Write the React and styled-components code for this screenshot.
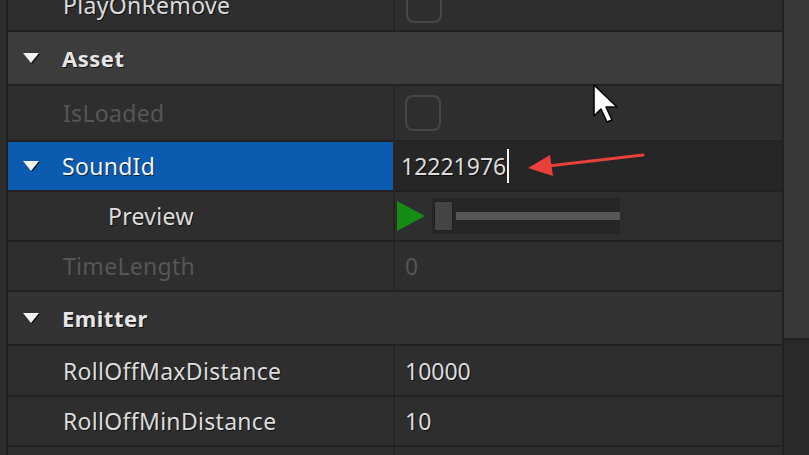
import React from 'react'
import styled, { createGlobalStyle } from 'styled-components'

const Global = createGlobalStyle`
  html, body {
    margin: 0;
    padding: 0;
    background: #2c2c2c;
    overflow: hidden;
  }
  body {
    font-family: "Noto Sans", "Open Sans", sans-serif;
  }
`

const Page = styled.div`
  position: relative;
  display: flex;
  width: 809px;
  height: 455px;
  overflow: hidden;
  background: #2c2c2c;
`

const Gutter = styled.div`
  width: 6px;
  flex: none;
  background: #2d2d2d;
  border-right: 2px solid #1f1f1f;
`

const Panel = styled.div`
  flex: 1;
  display: flex;
  flex-direction: column;
  margin-top: -21px;
  border-right: 2px solid #222;
`

const Row = styled.div`
  display: grid;
  grid-template-columns: 385px 1fr;
  height: ${p => p.h || 50}px;
  flex: none;
  box-sizing: border-box;
  border-bottom: 2px solid #222;
  background: #2e2e2e;
`

const Header = styled.div`
  display: flex;
  align-items: center;
  height: ${p => p.h || 54}px;
  flex: none;
  box-sizing: border-box;
  border-bottom: 2px solid #222;
  background: ${p => (p.hover ? '#3c3c3c' : '#333333')};
  color: #e6e6e6;
  font-size: 22px;
  letter-spacing: 0.5px;
  font-weight: 700;
  text-shadow: 1px 1px 0 rgba(0, 0, 0, 0.7);
`

const Caret = styled.span`
  width: 0;
  height: 0;
  margin: 0 23px 0 15px;
  border-left: 8px solid transparent;
  border-right: 8px solid transparent;
  border-top: 10px solid #f2f2f2;
  filter: drop-shadow(1px 1px 0 rgba(0, 0, 0, 0.8));
`

const Name = styled.div`
  display: flex;
  align-items: center;
  padding-left: ${p => p.indent || 55}px;
  font-size: 23px;
  letter-spacing: 0.3px;
  color: ${p => (p.disabled ? '#565656' : '#dcdcdc')};
  background: ${p => (p.selected ? '#0b5bb0' : 'transparent')};
  text-shadow: ${p => (p.disabled ? 'none' : '1px 1px 0 rgba(0, 0, 0, 0.6)')};
  ${p => p.selected && 'color: #f4f4f4; padding-left: 0;'}
`

const Value = styled.div`
  display: flex;
  align-items: center;
  padding-left: ${p => p.pad ?? 12}px;
  border-left: 2px solid #262626;
  font-size: 23px;
  color: ${p => (p.disabled ? '#555555' : '#dcdcdc')};
  background: ${p => (p.editing ? '#262626' : 'transparent')};
  text-shadow: ${p => (p.disabled ? 'none' : '1px 1px 0 rgba(0, 0, 0, 0.7)')};
`

const Checkbox = styled.span`
  width: 36px;
  height: 36px;
  box-sizing: border-box;
  border: 2px solid #474747;
  border-radius: 8px;
`

const TextCursor = styled.span`
  display: inline-block;
  width: 2px;
  height: 34px;
  margin-left: 1px;
  background: #f2f2f2;
`

const Play = styled.span`
  width: 0;
  height: 0;
  border-top: 15px solid transparent;
  border-bottom: 15px solid transparent;
  border-left: 28px solid #138d13;
  margin-right: 7px;
`

const Slider = styled.div`
  display: flex;
  align-items: center;
  width: 188px;
  height: 36px;
  padding-left: 2px;
  box-sizing: border-box;
  background: #272727;
`

const Thumb = styled.span`
  width: 19px;
  height: 30px;
  box-sizing: border-box;
  background: #454545;
  border: 1px solid #1f1f1f;
  border-radius: 2px;
`

const Track = styled.span`
  flex: 1;
  height: 8px;
  margin-left: 3px;
  background: #575757;
`

const Scrollbar = styled.div`
  width: 25px;
  flex: none;
  display: flex;
  flex-direction: column;
  background: #2a2a2a;
`

const ScrollThumb = styled.div`
  height: 338px;
  background: #393939;
  border-bottom: 3px solid #232323;
`

const Overlay = styled.svg`
  position: absolute;
  left: 0;
  top: 0;
  pointer-events: none;
`

export default function App () {
  return (
    <Page>
      <Global />
      <Gutter />
      <Panel>
        <Row h={53}>
          <Name>PlayOnRemove</Name>
          <Value pad={11}><Checkbox /></Value>
        </Row>
        <Header hover><Caret />Asset</Header>
        <Row h={56}>
          <Name disabled>IsLoaded</Name>
          <Value pad={10}><Checkbox /></Value>
        </Row>
        <Row>
          <Name selected><Caret />SoundId</Name>
          <Value editing pad={6}>12221976<TextCursor /></Value>
        </Row>
        <Row>
          <Name indent={100}>Preview</Name>
          <Value pad={2}>
            <Play />
            <Slider><Thumb /><Track /></Slider>
          </Value>
        </Row>
        <Row>
          <Name disabled>TimeLength</Name>
          <Value disabled pad={10}>0</Value>
        </Row>
        <Header><Caret />Emitter</Header>
        <Row h={51}>
          <Name>RollOffMaxDistance</Name>
          <Value pad={10}>10000</Value>
        </Row>
        <Row>
          <Name>RollOffMinDistance</Name>
          <Value pad={10}>10</Value>
        </Row>
        <Row>
          <Name />
          <Value />
        </Row>
      </Panel>
      <Scrollbar><ScrollThumb /></Scrollbar>
      <Overlay width="809" height="455">
        <line x1="643" y1="155" x2="548" y2="166" stroke="#e8413b" strokeWidth="3" strokeLinecap="round" />
        <polygon points="528,168 550,155 553,176" fill="#e8413b" />
        <path d="M594 85 L594 116 L601 109 L607 122 L612 120 L606 107 L617 107 Z" fill="#ffffff" stroke="#000000" strokeWidth="1.5" strokeLinejoin="round" />
      </Overlay>
    </Page>
  )
}
